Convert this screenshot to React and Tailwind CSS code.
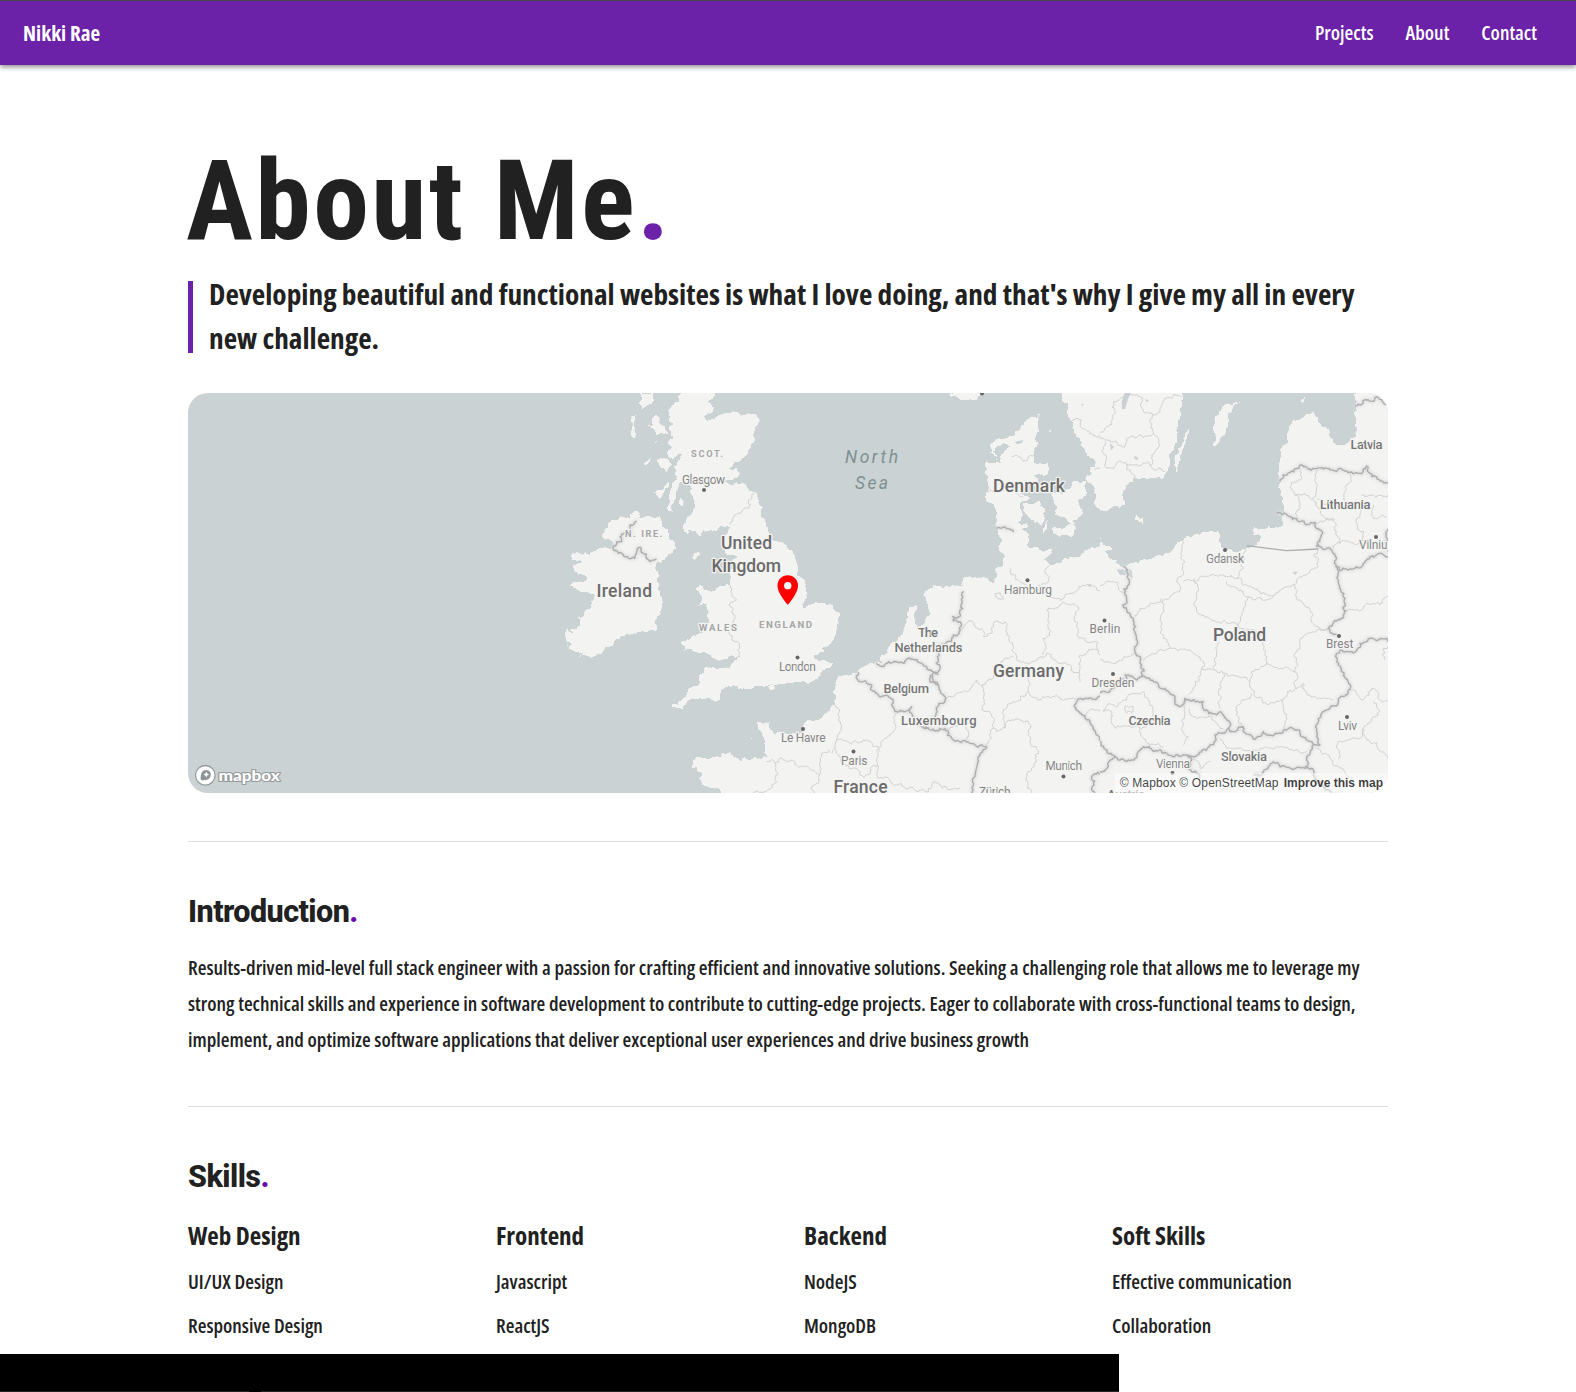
import React from 'react';

const OS = "font-['Open_Sans',sans-serif] [font-stretch:75%]";

const NW = {
  land: [
    // Great Britain
    '428,20 418,45 395,62 385,75 390,95 388,110 400,115 385,125 392,140 400,160 385,175 395,190 380,205 400,222 425,208 402,245 405,265 410,285 390,320 388,345 385,378 398,380 408,335 415,310 428,290 445,300 455,310 452,325 462,345 465,365 455,385 440,400 430,420 432,440 445,448 445,435 465,437 480,455 490,435 520,437 540,422 570,425 565,440 550,455 545,475 550,490 565,510 590,518 565,530 580,550 570,590 568,600 550,603 520,618 492,613 478,601 470,608 485,643 480,658 465,670 490,655 500,658 505,700 500,728 475,748 450,763 422,773 432,798 440,793 465,801 495,803 520,820 545,825 560,823 575,811 600,813 580,833 570,851 495,848 475,873 480,888 465,903 440,923 415,960 395,958 395,966 415,968 430,978 440,953 465,943 480,940 500,940 525,953 540,938 545,913 580,900 615,911 645,910 640,903 680,903 695,898 715,896 770,890 800,895 830,883 845,858 870,848 878,833 845,826 820,813 855,798 840,790 865,783 890,748 897,713 898,683 880,663 850,653 820,658 795,670 785,658 800,638 800,625 795,605 785,578 770,572 775,555 770,535 765,510 740,480 715,470 690,465 685,440 670,400 668,365 655,340 640,320 620,305 590,292 545,290 560,285 600,265 590,250 565,250 580,240 600,228 615,215 635,175 640,140 655,115 655,98 640,88 600,88 545,87 530,95 500,110 495,90 520,75 515,62 500,52 510,45 525,20',
    // Ireland
    '95,505 150,510 185,490 215,490 225,480 210,465 187,455 195,440 190,435 215,405 240,393 270,400 280,380 300,385 295,398 330,395 360,393 368,410 365,425 385,435 388,460 405,475 400,500 375,520 350,530 345,550 355,560 358,600 368,650 360,690 350,698 345,738 310,738 265,748 220,782 190,798 150,817 115,817 130,803 80,780 105,776 78,765 75,750 70,742 100,743 75,735 110,731 120,710 110,695 130,693 150,670 165,630 160,625 140,622 118,618 90,602 115,590 140,580 145,575 130,570 105,560 98,545 115,535 125,530 95,520',
    '300,20 345,20 342,45 322,60 305,75 298,55', '272,90 292,88 285,105 282,160 278,155 280,115',
    '345,88 360,100 360,115 375,130 385,150 350,150 335,128 320,120 340,120', '352,230 380,220 395,240 380,262 360,245',
    '340,320 365,315 385,290 388,300 368,330 355,345', '418,335 430,345 428,362 415,355', '458,520 475,498 480,505 465,525',
    '682,905 695,900 705,908 692,918', '343,172 350,168 352,178', '310,238 333,220 330,228', '630,1060 641,1062',
    // Brittany and Normandy
    '457,1128 485,1118 510,1120 540,1117 545,1105 570,1102 580,1115 600,1130 615,1115 630,1125 682,1120 675,1090 672,1060 655,1030 650,1012 670,1017 690,1012 698,1040 705,1047 720,1040 760,1045 790,1040 790,1020 805,1005 850,993 885,970 888,940 890,885 950,865 1000,840 1000,1240 560,1240 530,1208 490,1200 485,1185 465,1180 487,1173 485,1165 470,1160 470,1145 457,1148',
  ],
  minor: [
    '645,325 625,345 632,360 600,385 570,418', '570,600 590,645 568,660 575,680 568,740 575,765 598,780 598,813',
    '882,1100 840,1120 838,1170 820,1230',
    '680,1130 705,1135 765,1130 790,1145 820,1155 838,1170', '705,1135 710,1190 690,1212 640,1224',
  ],
  major: ['290,408 270,420 272,445 240,455 245,470 222,483 235,505 270,522 285,520 290,500 302,487 330,530 350,522'],
};

const MID = {
  land: [
    '360,20 365,35 390,45 430,45 470,20',
    // Jutland and northern Germany down to the Alps
    '630,85 620,98 600,97 580,120 570,130 550,155 510,160 480,180 478,205 500,225 500,215 490,200 520,175 540,185 525,195 520,205 510,215 515,235 490,235 467,228 470,250 465,260 475,290 470,320 470,350 485,355 497,375 500,425 515,470 505,485 510,500 525,515 515,545 495,555 500,575 490,595 480,590 460,575 400,580 395,590 400,605 370,600 350,603 300,610 280,632 290,650 298,675 285,705 262,725 255,715 262,675 258,660 235,665 235,695 215,750 195,770 170,795 185,807 155,810 150,825 170,840 135,835 85,862 22,875 20,940 15,960 0,975 0,1240 920,1240 920,545 900,540 870,535 855,530 840,520 850,510 830,490 840,475 820,460 815,485 795,490 770,495 750,515 725,515 690,535 660,540 640,525 665,505 665,492 640,500 620,485 600,490 590,480 595,455 590,440 570,435 590,430 590,415 560,412 575,395 570,370 575,350 600,340 570,325 590,300 625,290 612,270 640,275 655,260 655,235 612,235 612,210 615,160 628,140 625,110',
    '580,355 600,360 625,347 645,370 645,400 635,420 600,400 585,385',
    '670,340 665,325 700,325 725,295 735,287 770,290 768,330 745,345 758,375 755,390 730,405 738,418 720,415 700,395 675,390 680,365',
    '665,430 700,430 735,420 740,430 720,455 690,458 670,445', '650,405 640,445 650,430 657,405', '653,138 662,135 670,139 660,143',
    '690,20 700,50 715,55 712,85 728,110 735,145 750,160 770,205 790,220 795,245 780,245 785,265 770,270 765,280 785,300 798,330 795,360 825,375 860,365 885,372 885,325 900,300 920,295 920,20',
  ],
  minor: [
    '15,960 28,995 30,1040 20,1065 15,1090 40,1140 90,1170 115,1170 120,1150 145,1145 145,1105 165,1060 190,1040 200,985',
    '20,1065 80,1070 110,1065 130,1085 150,1100', '145,1145 145,1180 180,1185 200,1200 295,1220 310,1190 390,1210', '15,1090 5,1105',
    '390,735 430,712 455,730 460,755 485,745 490,715 525,710 530,750 550,785 560,815 595,835 650,805 690,835 750,870 750,890',
    '550,815 520,825 515,855 470,890 460,940 455,975 485,990 490,1030 500,1040 545,1005 580,1010 600,1030 600,1070 620,1090 615,1120 600,1160 605,1224',
    '345,945 440,885 460,900', '490,1030 470,1087', '590,840 595,920 630,945 680,930 740,945',
    '595,920 560,950 530,970 525,1030', '640,810 640,760 660,750 650,675 700,650 745,665 748,760 805,775 805,795 750,810 745,865',
    '805,795 840,825 900,815', '680,640 720,625 760,600 800,615 905,600', '760,995 800,975 850,975 900,930', '850,975 850,1030 905,1030',
    '540,550 570,590 590,600', '660,540 645,560 655,590 620,610 680,640', '545,215 580,230 612,210', '470,320 490,322', '560,325 580,335',
    '735,103 755,105 755,130 805,155 835,155 870,175 890,180', '805,155 845,95 850,50 870,40', '825,160 820,200 830,245 795,255',
    '830,245 900,235', '690,117 735,103', '495,625 510,622 522,640 505,642 495,625', '812,700 822,692 835,700 845,692',
    '345,1030 400,1020 412,1035 408,1065',
  ],
  major: [
    '402,620 398,670 390,695 368,695 370,708 390,710 388,745 370,750 365,770 320,780 330,850 305,870 325,900 345,945 320,975 300,1000 285,1030 345,1030 370,1065 420,1075 470,1087 445,1130 435,1170 428,1230',
    '138,835 200,830 245,822 275,835 300,855 325,870', '300,870 302,892 325,898', '85,862 90,890 125,900 140,925 190,945 195,980 225,980 245,965 245,1000 290,1030',
    '740,950 770,940 830,920 860,890 912,872', '740,950 765,1000 800,1050 855,1115 830,1130 825,1160 785,1175 795,1230',
    '855,1115 912,1125', '500,430 540,432 550,442',
  ],
  water: ['555,170 580,165 575,175 560,178', '875,50 890,40 895,50 885,70', '752,60 760,55 760,62', '835,175 850,178 843,195', '770,598 782,598 782,608'],
};

const EAST = {
  land: [
    '-30,20 248,20 240,70 240,100 232,150 225,175 215,200 200,260 190,285 175,275 105,278 100,290 80,300 70,320 75,360 60,370 30,370 0,378 -20,372 -30,370',
    '268,130 255,150 235,190 222,220 222,268 235,240 245,205 262,150',
    '420,52 375,58 345,95 340,130 348,155 340,182 352,180 365,155 385,120 385,85 400,70', '605,55 603,48 615,30 612,48',
    '107,385 130,400 130,417 105,405',
    // Baltic states, Poland and everything to the south
    '640,82 650,95 655,110 680,130 690,160 718,180 745,170 768,155 765,120 768,60 770,20 880,20 880,1240 -20,1240 -20,535 0,455 10,480 30,485 35,495 15,500 25,515 50,525 50,535 70,545 100,535 165,512 205,505 240,470 275,455 325,440 355,438 358,460 370,490 415,503 440,490 455,485 480,468 483,455 460,450 463,427 550,425 552,390 550,360 540,330 537,240 540,195 565,170 565,140 580,105 610,95',
  ],
  minor: [
    '600,250 605,275 575,300 585,330 630,340 650,320 645,290 650,250', '640,345 660,385 700,405 710,440 720,475 700,490',
    '585,330 600,370 590,395', '750,265 735,320 740,355 690,350 650,345', '645,412 705,405', '780,355 770,400 790,440 780,470 720,475', '785,330 870,330',
    '820,360 820,400 860,395', '250,470 255,530 250,570 230,590 240,615', '250,590 310,575 340,568 410,580 430,550 440,495',
    '410,580 430,600 480,625 520,632 580,600 650,550 655,530 640,510 655,495', '0,160 35,110 40,50 100,30 120,35 130,80 160,90 160,140 180,180 155,210 150,240 195,260',
    '160,145 120,150 85,160 75,185 50,170 20,165 0,160', '15,170 15,245 80,235 95,265 105,285', '80,240 150,240', '160,90 180,70 200,40 245,35',
    '185,640 185,720 190,760 220,790 280,805 305,850 340,855', '105,695 120,670 190,645 240,615', '285,580 290,680 360,715 415,725 445,635 430,620 380,590',
    '445,635 520,635', '580,600 590,640 630,670 640,715 685,730', '360,770 340,850 375,865 450,890 455,860 495,840 500,815 490,750 415,725',
    '495,840 590,865 590,910 545,945 490,955 455,910 450,890', '130,825 210,790', '305,850 285,890 265,930', '375,865 355,920 360,970',
    '455,925 415,960 410,990 430,1025', '545,945 560,1035', '590,910 610,895 640,935 700,945', '685,730 600,765 590,820 590,865',
    '735,680 790,670 800,655 840,660 865,635', '870,780 850,790 855,825', '745,915 770,925 790,945 815,910 864,950',
    '820,950 835,990 800,1020 790,1030 800,1060 850,1100 864,1120', '715,1120 710,1080 770,1060 790,1030', '10,980 40,960 85,930 130,920 160,985 155,1020 120,1030 45,1030 35,980 10,980',
    '120,1030 130,1060 190,1085', '250,950 245,1030 265,1055 250,1080', '265,970 290,1000 345,1010 370,1030', '360,1060 380,1090 470,1095 530,1085 620,1100',
    '75,965 100,965 100,980 80,985 75,965', '0,825 50,830 75,815 105,805', '0,605 40,590 80,620',
    '650,1090 690,1120 720,1150 760,1200', '270,1110 300,1150 330,1130', '360,1220 400,1200 460,1190',
  ],
  major: [
    '765,62 800,45 825,38 858,60', '540,290 570,262 610,245 640,250 680,250 740,258 780,265 800,243 815,275 866,290',
    '530,385 560,388 600,410 645,412 662,435 650,485 700,505 708,545 715,590 735,640 730,690 685,730 710,750',
    '708,545 770,545 800,525 840,505 866,515', '866,430 858,455 850,480 866,500',
    '70,545 85,600 68,660 100,700 105,800 125,840 125,875 195,910 240,965 255,940 310,950 320,975 360,980 385,1030 400,1040 430,1025 460,1062 490,1040 560,1035 600,1045 620,1065 660,1080 650,1030 690,970 745,925 745,890 715,840 710,805 755,800 780,775 870,770',
    '-15,1060 45,1115 85,1125 105,1120 130,1085 190,1105 260,1110 330,1080 345,1050 385,1030',
    '640,1080 620,1115 615,1150 520,1130 490,1160 460,1170', '-5,920 80,885 75,870 110,885 125,875', '45,1115 0,1160',
    '615,1150 660,1190 720,1230', '260,1110 275,1160 300,1180',
  ],
  straight: '440,482 560,497 655,492',
  water: ['50,553 95,555 98,580 80,570 60,570', '65,50 75,20 95,20 85,40 75,72 66,72', '30,175 42,185 33,197', '102,212 115,218 113,225 104,222', '578,560 594,560 585,570', '135,42 146,46 140,52'],
};

// Deterministic offset in [-1, 1] for a pair of coordinates.
function noise(x, y) {
  const v = Math.sin(x * 12.9898 + y * 78.233) * 43758.5453;
  return (v - Math.floor(v)) * 2 - 1;
}

// Breaks the short runs of an outline into a ragged line; long frame edges stay straight.
function ragged(points, amount, closed) {
  let pts = points.split(' ').map((p) => p.split(',').map(Number));
  if (closed) pts.push(pts[0]);
  for (let pass = 0; pass < 4; pass += 1) {
    const next = [pts[0]];
    for (let i = 1; i < pts.length; i += 1) {
      const [ax, ay] = pts[i - 1];
      const [bx, by] = pts[i];
      const len = Math.hypot(bx - ax, by - ay);
      if (len > 7 && len < 190) {
        const k = noise((ax + bx) / 2, (ay + by) / 2) * amount * Math.min(1, 28 / len);
        next.push([(ax + bx) / 2 - (by - ay) * k, (ay + by) / 2 + (bx - ax) * k]);
      }
      next.push(pts[i]);
    }
    pts = next;
  }
  return pts.map(([x, y]) => `${x.toFixed(1)},${y.toFixed(1)}`).join(' ');
}

const prepare = (r) => ({
  ...r,
  land: r.land.map((p) => ragged(p, 0.25, true)),
  minor: r.minor.map((p) => ragged(p, 0.32)),
  major: r.major.map((p) => ragged(p, 0.32)),
});

const REGIONS = [
  { x: 1056, id: 'nw', w: 925, d: prepare(NW) },
  { x: 1926, id: 'mid', w: 818, d: prepare(MID) },
  { x: 2736, id: 'east', w: 870, d: prepare(EAST) },
];

// [text, left, baseline, width, size, weight, fill]
const LABELS = [
  ['SCOT.', 691, 457, 32, 9.2, 700, '#a6a6a6'],
  ['Glasgow', 682, 484, 43, 12, 400, '#858585'],
  ['N. IRE.', 625, 537, 37.5, 9.2, 700, '#a6a6a6'],
  ['United', 721, 549.4, 51, 17.5, 500, '#6b6b6b'],
  ['Kingdom', 711.5, 571.6, 69.5, 17.5, 500, '#6b6b6b'],
  ['Ireland', 596.5, 596.5, 55.5, 17.5, 500, '#6b6b6b'],
  ['WALES', 699, 630.6, 38, 9.6, 700, '#a6a6a6'],
  ['ENGLAND', 759, 628.4, 53, 9.6, 700, '#a6a6a6'],
  ['London', 779, 670.6, 37, 12, 400, '#858585'],
  ['Le Havre', 781, 742.3, 44.5, 12, 400, '#858585'],
  ['Paris', 841, 765, 26.5, 12, 400, '#858585'],
  ['France', 833.5, 792.5, 54, 17.5, 500, '#6b6b6b'],
  ['Denmark', 993, 491.8, 72, 17.5, 500, '#6b6b6b'],
  ['Hamburg', 1004, 594.3, 48, 12, 400, '#858585'],
  ['Berlin', 1089.5, 633, 31, 12, 400, '#858585'],
  ['The', 918, 637, 20, 13, 500, '#757575'],
  ['Netherlands', 894.5, 652.3, 68, 13, 500, '#757575'],
  ['Germany', 993, 677, 71, 17.5, 500, '#6b6b6b'],
  ['Belgium', 883.5, 693.2, 45.5, 13, 500, '#757575'],
  ['Luxembourg', 901, 724.6, 75.5, 13, 500, '#757575'],
  ['Dresden', 1091.5, 687, 43, 12, 400, '#858585'],
  ['Munich', 1045.5, 770.3, 36.5, 12, 400, '#858585'],
  ['Zürich', 979, 796, 31.5, 12, 400, '#858585'],
  ['Austria', 1107, 798.5, 38, 13, 500, '#757575'],
  ['Czechia', 1128.5, 725, 42, 13, 500, '#757575'],
  ['Poland', 1213, 641, 53, 17.5, 500, '#6b6b6b'],
  ['Brest', 1326, 648.4, 27.5, 12, 400, '#858585'],
  ['Lviv', 1338, 730, 19, 12, 400, '#858585'],
  ['Slovakia', 1221, 761.3, 46, 13, 500, '#757575'],
  ['Vienna', 1156, 768, 34, 12, 400, '#858585'],
  ['Gdansk', 1206, 562.6, 38, 12, 400, '#858585'],
  ['Lithuania', 1320, 509.3, 50.5, 13, 500, '#757575'],
  ['Latvia', 1350.5, 449, 32, 13, 500, '#757575'],
  ['Vilnius', 1359, 549, 34.5, 12, 400, '#858585'],
];

const CITIES = [
  [704, 490], [797.5, 657.5], [803, 729], [853.5, 751.5], [1027.5, 580.3], [1104.5, 620.4], [1113, 674], [1063.5, 776.5],
  [1339, 636], [1347, 717], [1172.5, 773], [1225, 550], [1376, 537], [982, 393.5],
];

function EuropeMap() {
  return (
    <svg viewBox="188 393 1200 400" className="block h-[400px] w-[1200px] [font-stretch:100%]" fontFamily="Roboto, sans-serif">
      <defs>
        <filter id="soft" filterUnits="userSpaceOnUse" x="-60" y="-60" width="1100" height="1400"><feGaussianBlur stdDeviation="4" /></filter>
        {REGIONS.map((r) => (
          <clipPath id={r.id} key={r.id}><rect x="0" y="0" width={r.w} height="1240" /></clipPath>
        ))}
      </defs>
      <rect x="188" y="393" width="1200" height="400" fill="#cad2d3" />
      <g transform="translate(188 393) scale(0.33333)" fill="none" strokeLinejoin="round">
        {REGIONS.map((r) => (
          <g key={r.id} transform={`translate(${r.x} -24)`}>
            <g clipPath={`url(#${r.id})`}>
              <g fill="#f3f3f2" shapeRendering="crispEdges">
                {r.d.land.map((p) => <polygon key={p} points={p} />)}
              </g>
              {(r.d.water || []).map((p) => <polygon key={p} points={p} fill="#cad2d3" />)}
              <g stroke="#dfdfdf" strokeWidth="11" filter="url(#soft)">
                {r.d.major.map((p) => <polyline key={p} points={p} />)}
              </g>
              <g stroke="#cdcdcd" strokeWidth="2.8">
                {r.d.minor.map((p) => <polyline key={p} points={p} />)}
              </g>
              <g stroke="#adadad" strokeWidth="4">
                {r.d.major.map((p) => <polyline key={p} points={p} />)}
                {r.d.straight && <polyline points={r.d.straight} />}
              </g>
            </g>
          </g>
        ))}
      </g>
      {CITIES.map(([x, y]) => <circle key={x} cx={x} cy={y} r="2" fill="#666" />)}
      <g stroke="#f3f3f2" strokeWidth="2.4" strokeLinejoin="round" paintOrder="stroke">
        {LABELS.map(([t, x, y, w, s, wt, c]) => (
          <text key={t} x={x} y={y} textLength={w} fontSize={s} fontWeight={wt} fill={c}>{t}</text>
        ))}
      </g>
      <g fill="#7e9092" fontSize="17.5" fontStyle="italic">
        <text x="845" y="462.5" textLength="53">North</text>
        <text x="855" y="488.8" textLength="33">Sea</text>
      </g>
      <g transform="translate(770.1 572.4) scale(1.47)">
        <path d="M12 2C8.13 2 5 5.13 5 9c0 5.25 7 13 7 13s7-7.75 7-13c0-3.87-3.13-7-7-7z" fill="#f00" />
        <circle cx="12" cy="9" r="2.5" fill="#fff" />
      </g>
      <circle cx="205.3" cy="775.3" r="9.8" fill="#fff" stroke="#959b9c" strokeWidth="1.3" />
      <path d="M200.9 779.9c-.7-4.2.3-10 5.3-10a4.7 4.7 0 0 1 4.6 4.7c0 4.800-4.800 6.500-9.900 5.300z" fill="#8d9495" />
      <path d="M206.3 771.6l.9 2 2 .9-2 .9-.9 2-.9-2-2-.9 2-.9z" fill="#fff" />
      <text x="218.5" y="780.5" textLength="61.5" lengthAdjust="spacingAndGlyphs" fontFamily="Lato, sans-serif" fontSize="15" fontWeight="900" fill="#fff" stroke="#959b9c" strokeWidth="2.2" strokeLinejoin="round" paintOrder="stroke">mapbox</text>
    </svg>
  );
}

const SKILLS = [
  ['Web Design', 'UI/UX Design', 'Responsive Design'],
  ['Frontend', 'Javascript', 'ReactJS'],
  ['Backend', 'NodeJS', 'MongoDB'],
  ['Soft Skills', 'Effective communication', 'Collaboration'],
];

function SectionTitle({ children }) {
  return (
    <h2 className="mt-[50px] h-10 font-['Roboto',sans-serif] text-[30.5px] leading-10 font-extrabold tracking-[-0.55px] [font-stretch:100%]">
      {children}<span className="text-[#6a0dad]">.</span>
    </h2>
  );
}

export default function App() {
  return (
    <div className={`relative h-[1392px] w-[1576px] overflow-hidden bg-white text-[#212121] ${OS}`}>
      <header className="flex h-[65px] items-center justify-between border-t border-[#474747] bg-[#6b21a8] pr-[39px] pl-[23px] text-[20px] leading-7 text-white shadow-[0_2px_5px_rgba(0,0,0,0.45)]">
        <span className="text-[21px] font-bold">Nikki Rae</span>
        <nav className="flex gap-8 pb-px font-semibold">
          <a>Projects</a><a>About</a><a>Contact</a>
        </nav>
      </header>
      <main className="mx-auto w-[1200px] pt-20">
        <h1 className="-ml-0.5 h-28 font-['Roboto',sans-serif] text-[112px] leading-[112px] font-bold tracking-[2.4px] whitespace-nowrap [font-stretch:75%]">
          About Me<span className="text-[#6b21a8]">.</span>
        </h1>
        <blockquote className="mt-6 h-[72px] border-l-[5px] border-[#6b21a8] pl-4">
          <p className="-translate-y-[9px] text-[29.33px] leading-[44px] font-bold">
            Developing beautiful and functional websites is what I love doing, and that's why I give my all in every new challenge.
          </p>
        </blockquote>
        <div className="relative mt-10 h-[400px] overflow-hidden rounded-[20px]">
          <EuropeMap />
          <div className="absolute right-0 bottom-0 flex h-5 items-center gap-[5px] bg-white/50 px-[5px] font-['Liberation_Sans',sans-serif] text-[12px] leading-5 whitespace-nowrap text-black/75 [font-stretch:100%]">
            <span className="tracking-[0.16px]">© Mapbox © OpenStreetMap</span><b>Improve this map</b>
          </div>
        </div>
        <hr className="mt-12 border-t border-[#dedede]" />
        <SectionTitle>Introduction</SectionTitle>
        <p className="mt-[18px] text-[20px] leading-9 font-semibold">
          Results-driven mid-level full stack engineer with a passion for crafting efficient and innovative solutions. Seeking a challenging role that allows me to leverage my strong technical skills and experience in software development to contribute to cutting-edge projects. Eager to collaborate with cross-functional teams to design, implement, and optimize software applications that deliver exceptional user experiences and drive business growth
        </p>
        <hr className="mt-12 border-t border-[#dedede]" />
        <SectionTitle>Skills</SectionTitle>
        <div className="mt-5 grid grid-cols-4 gap-8">
          {SKILLS.map(([title, ...items]) => (
            <div key={title}>
              <h3 className="text-[25px] leading-9 font-bold">{title}</h3>
              <ul className="mt-[15px] flex flex-col gap-4 text-[20px] leading-7 font-semibold">
                {items.map((i) => <li key={i}>{i}</li>)}
              </ul>
            </div>
          ))}
        </div>
      </main>
      <div className="absolute bottom-0 left-0 flex h-[38px] w-[1119px] items-end justify-between bg-black">
        <span className="h-px w-[249px] bg-[#262626]" />
        <span className="h-px w-[858px] bg-[#262626]" />
      </div>
    </div>
  );
}
